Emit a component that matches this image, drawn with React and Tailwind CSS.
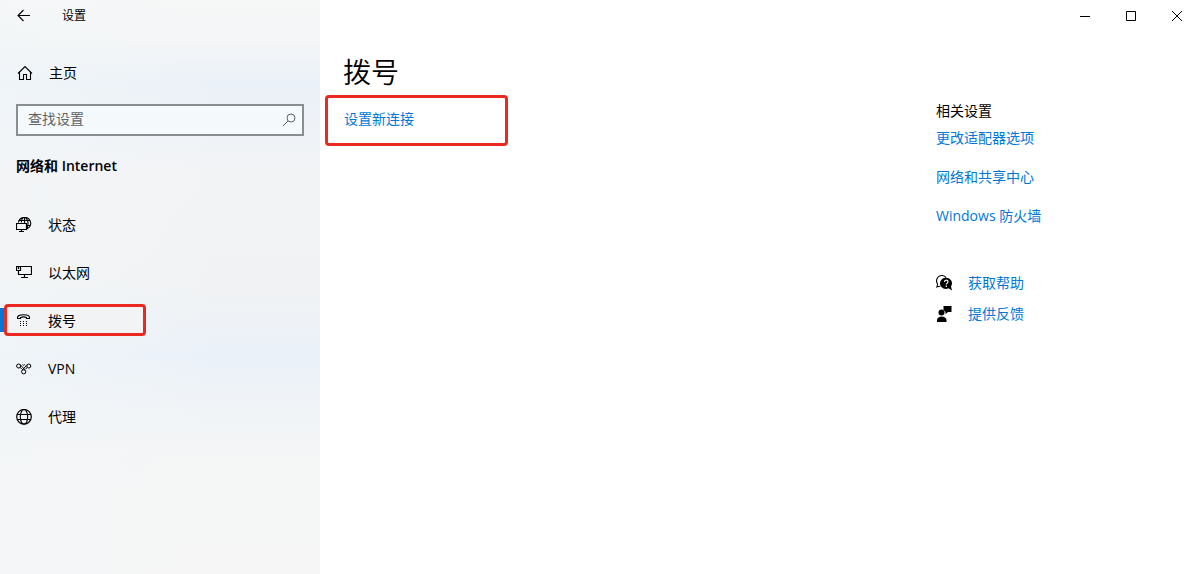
import React from 'react';

const iconProps = {
    width: 16,
    height: 16,
    viewBox: '0 0 16 16',
    fill: 'none',
    stroke: 'currentColor',
    strokeWidth: 1,
    'aria-hidden': true,
    className: 'shrink-0',
};

const BackIcon = () => (
    <svg {...iconProps}>
        <path d="M14 7.5H2.5M7.5 2L2 7.5L7.5 13" strokeWidth="1.1" />
    </svg>
);

const HomeIcon = () => (
    <svg {...iconProps}>
        <path d="M1 8.5L8 1.5L15 8.5M2.5 7V14.5H6.5V9.5H9.5V14.5H13.5V7" strokeWidth="1.1" />
    </svg>
);

const SearchIcon = () => (
    <svg {...iconProps}>
        <circle cx="11" cy="6" r="4" />
        <path d="M8 9L3 14" />
    </svg>
);

const StatusIcon = () => (
    <svg {...iconProps}>
        <path d="M2.4 5.5A6.2 6 0 1 1 11 11.8M5.3 5.5C5.5 2.5 7 0.5 8.5 0.5S12 3 12 6.2C12 8.6 11.5 10.5 10.5 11.8M8.5 1V6M3 3.5H14M11 8.5H14.5" strokeWidth="1.1" />
        <path d="M0.5 6.5H10.5V12.5H0.5ZM5.5 12.5V14.5M3 14.5H8" strokeWidth="1.2" />
    </svg>
);

const EthernetIcon = () => (
    <svg {...iconProps}>
        <path d="M0.5 1.5H4.5V5.5H0.5ZM2.5 2V4M4.5 1.5H15.5V9.5H2.5V5.5M8.5 9.5V12.5M5 12.5H12" strokeWidth="1.2" />
    </svg>
);

const DialIcon = () => (
    <svg {...iconProps}>
        <path d="M1.5 5.5V4.5C1.5 2.5 4 1.8 7.5 1.8S13.5 2.5 13.5 4.5V5.5H10.5V4.5C9 3.9 6 3.9 4.5 4.5V5.5Z" strokeWidth="1.1" />
        <path d="M4 8.5H5M7 8.5H8M10 8.5H11M4 10.5H5M7 10.5H8M10 10.5H11M4 12.5H5M7 12.5H8M10 12.5H11" />
    </svg>
);

const VpnIcon = () => (
    <svg {...iconProps}>
        <circle cx="2.6" cy="5" r="2" />
        <circle cx="12.8" cy="5" r="2" />
        <circle cx="7.7" cy="10.8" r="2.1" />
        <path d="M4.2 3.7L9.4 9.3M11.2 3.7L6 9.3M6.6 3.3L7.7 4.5L8.8 3.3M4.4 6.4L5.6 8M11 6.4L9.8 8" />
    </svg>
);

const GlobeIcon = () => (
    <svg {...iconProps}>
        <circle cx="8" cy="7.8" r="7.3" strokeWidth="1.2" />
        <ellipse cx="8" cy="7.8" rx="3.7" ry="7.3" strokeWidth="1.1" />
        <path d="M1.3 5.5H14.7M1.3 10.5H14.7" />
    </svg>
);

const HelpIcon = () => (
    <svg {...iconProps}>
        <path d="M4.5 11L0.9 12L1.6 9A5 5 0 1 1 10 2.6" strokeWidth="1.1" />
        <path d="M10 2.8A5.6 5.6 0 1 0 12.5 13.2L16 15.5L15 11.5A5.6 5.6 0 0 0 10 2.8Z" fill="currentColor" stroke="none" />
        <path d="M8.5 7C8.5 4.6 12 4.7 12 6.7C12 8 10.3 8.2 10.3 9.6M10.3 10.6V11.9" stroke="white" strokeWidth="1.2" />
    </svg>
);

const FeedbackIcon = () => (
    <svg {...iconProps} fill="currentColor" stroke="none">
        <circle cx="5.5" cy="6.5" r="3" />
        <path d="M1 16V14C1 9.3 10.5 9.3 10.5 14V16ZM7.5 0H15.5V6H12L9.5 8.2V6L7.5 4Z" />
    </svg>
);

const navItems = [
    { label: '状态', icon: StatusIcon },
    { label: '以太网', icon: EthernetIcon },
    { label: '拨号', icon: DialIcon, active: true },
    { label: 'VPN', icon: VpnIcon },
    { label: '代理', icon: GlobeIcon },
];

const relatedLinks = ['更改适配器选项', '网络和共享中心', 'Windows 防火墙'];

function Sidebar() {
    return (
        <aside className="w-80 shrink-0 bg-[linear-gradient(90deg,rgba(243,247,249,0.5),rgba(243,247,249,0)_70%),linear-gradient(180deg,#f6f7f7_0%,#f4f6f7_7%,#ebf1f8_14%,#eef2f7_22%,#f2f3f5_30%,#f1f2f3_48%,#eef2f6_55%,#ebf1f9_62%,#eff3f7_70%,#f5f6f6_80%,#f6f6f6_100%)]">
            <div className="flex h-8 items-center">
                <button type="button" aria-label="返回" className="flex h-8 w-12 items-center justify-center">
                    <BackIcon />
                </button>
                <span className="pl-3.5 text-xs">设置</span>
            </div>

            <a href="#home" className="mt-[25px] flex h-8 items-center gap-4 pl-[17px]">
                <HomeIcon />
                主页
            </a>

            <label className="mx-4 mt-[15px] flex h-8 items-center border-2 border-[#8a8e91] bg-[#f4f9fc] pr-1.5 pl-2.5 text-[#606468]">
                <input
                    type="text"
                    aria-label="查找设置"
                    placeholder="查找设置"
                    className="min-w-0 flex-1 bg-transparent pb-0.5 outline-none placeholder:text-[#606468]"
                />
                <SearchIcon />
            </label>

            <h2 className="mt-5 px-4 font-semibold">网络和 Internet</h2>

            <nav className="mt-[25px]">
                {navItems.map(({ label, icon: Icon, active }) => (
                    <a key={label} href={`#${label}`} className="relative flex h-12 items-center gap-4 px-4">
                        {active && (
                            <>
                                <span className="absolute top-[11px] left-0 h-6 w-1.5 bg-[#0078d7]" />
                                <span className="absolute top-[7px] left-1 h-8 w-[142px] rounded-sm border-3 border-[#ea2a20] bg-[#f1f3f5]" />
                            </>
                        )}
                        <span className="relative flex items-center gap-4">
                            <Icon />
                            {label}
                        </span>
                    </a>
                ))}
            </nav>
        </aside>
    );
}

function WindowControls() {
    return (
        <div className="flex h-8 justify-end">
            <button type="button" aria-label="最小化" className="flex w-[46px] items-center justify-center">
                <svg {...iconProps}>
                    <path d="M3 8.5H13" />
                </svg>
            </button>
            <button type="button" aria-label="最大化" className="flex w-[46px] items-center justify-center">
                <svg {...iconProps}>
                    <path d="M3.5 3.5H12.5V12.5H3.5Z" />
                </svg>
            </button>
            <button type="button" aria-label="关闭" className="flex w-[46px] items-center justify-center">
                <svg {...iconProps}>
                    <path d="M3 3L13 13M13 3L3 13" />
                </svg>
            </button>
        </div>
    );
}

export default function App() {
    return (
        <div className="flex min-h-screen bg-white font-['Open_Sans','Noto_Sans_CJK_SC',sans-serif] text-sm leading-5 text-black">
            <Sidebar />

            <div className="min-w-0 flex-1">
                <WindowControls />

                <div className="flex">
                    <main className="min-w-0 flex-1 pt-[22px]">
                        <h1 className="pl-[23px] text-[28px] leading-9 font-[350]">拨号</h1>
                        <div className="mt-[5px] ml-[5px] h-[51px] w-[183px] rounded-sm border-3 border-[#ea2a20] px-4 py-[11px]">
                            <a href="#new" className="block text-[#0078d7]">设置新连接</a>
                        </div>
                    </main>

                    <aside className="w-66 shrink-0 pt-[69px]">
                        <h2>相关设置</h2>
                        <ul className="mt-[7px] flex flex-col gap-[19px] text-[#0078d7]">
                            {relatedLinks.map((text) => (
                                <li key={text}>
                                    <a href="#related" className="block">{text}</a>
                                </li>
                            ))}
                        </ul>

                        {/* Help and feedback */}
                        <div className="mt-[47px] flex flex-col gap-[11px]">
                            <a href="#help" className="flex items-center gap-4">
                                <HelpIcon />
                                <span className="text-[#0078d7]">获取帮助</span>
                            </a>
                            <a href="#feedback" className="flex items-center gap-4">
                                <FeedbackIcon />
                                <span className="text-[#0078d7]">提供反馈</span>
                            </a>
                        </div>
                    </aside>
                </div>
            </div>
        </div>
    );
}
